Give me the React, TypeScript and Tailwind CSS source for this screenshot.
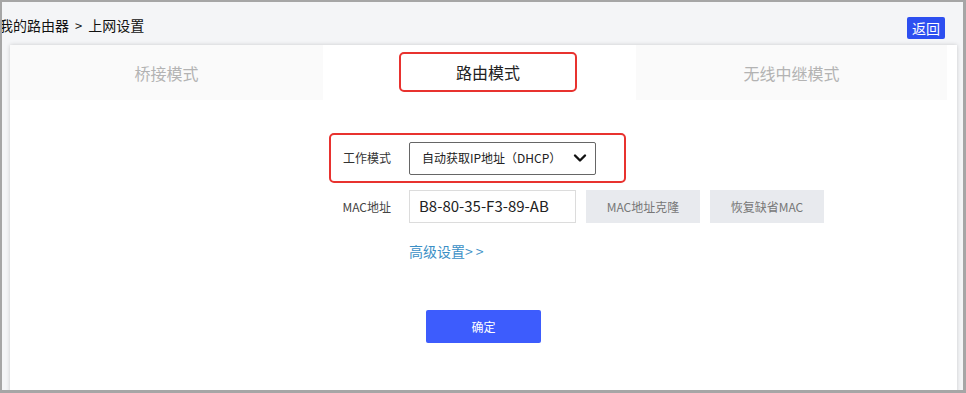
import React from "react";

const font = { fontFamily: '"Noto Sans CJK SC", "Noto Sans", sans-serif' };

export default function App() {
  return (
    <div
      className="w-[966px] h-[393px] overflow-hidden border-t-2 border-l-2 border-r-[3px] border-b-[3px] border-[#a6a6a6] bg-[#f4f5f7] box-border"
      style={font}
    >
      <div className="h-[43px] flex items-center justify-between pr-[18px]">
        <div className="-ml-[3px] mt-[4px] text-[14px] text-[#111] flex items-center">
          <span>我的路由器</span>
          <span className="mx-[6px] text-[13px]">&gt;</span>
          <span>上网设置</span>
        </div>
        <button className="mt-[9px] w-[38px] h-[22px] rounded-[2px] bg-[#2d4ff0] text-white text-[14px] leading-[22px]">
          返回
        </button>
      </div>
      <div className="ml-[8px] w-[947px] h-[400px] bg-white shadow-[0_0_4px_rgba(0,0,0,0.18)]">
        <div className="flex w-[937px] h-[55px]">
          <div className="w-[313px] flex items-center justify-center bg-[#fafafa] text-[16px] text-[#b3b3b3]">
            桥接模式
          </div>
          <div className="w-[313px] flex items-center bg-white">
            <div className="w-[178px] h-[40px] -mt-[1px] ml-[76px] border-2 border-[#e8322f] rounded-[5px] flex items-center justify-center text-[16px] text-[#222]">
              路由模式
            </div>
          </div>
          <div className="w-[311px] flex items-center justify-center bg-[#fafafa] text-[16px] text-[#b3b3b3]">
            无线中继模式
          </div>
        </div>

        <div className="mt-[33px] ml-[319px] w-[297px] h-[50px] border-2 border-[#e8322f] rounded-[5px] flex items-center">
          <div className="w-[60px] text-right text-[12px] text-[#333]">工作模式</div>
          <div className="ml-[18px] w-[187px] h-[33px] border border-[#666] rounded-[2px] flex items-center justify-between pl-[12px] pr-[8px] text-[12px] text-[#222]">
            <span>自动获取IP地址（DHCP）</span>
            <svg width="14" height="10" viewBox="0 0 14 10">
              <polyline points="2,2.5 7,7.5 12,2.5" fill="none" stroke="#111" strokeWidth="2.4" strokeLinecap="round" strokeLinejoin="round" />
            </svg>
          </div>
        </div>

        <div className="mt-[7px] ml-[321px] flex items-center">
          <div className="w-[60px] text-right text-[12px] text-[#444]">MAC地址</div>
          <div className="ml-[18px] w-[167px] h-[33px] border border-[#dcdcdc] flex items-center pl-[9px] text-[15px] text-[#222]">
            B8-80-35-F3-89-AB
          </div>
          <button className="ml-[10px] w-[114px] h-[33px] bg-[#e8eaee] text-[12px] text-[#777]">MAC地址克隆</button>
          <button className="ml-[10px] w-[114px] h-[33px] bg-[#e8eaee] text-[12px] text-[#777]">恢复缺省MAC</button>
        </div>

        <div className="mt-[18px] ml-[399px] text-[14px] text-[#3b8fc6] leading-[20px]">
          高级设置<span className="tracking-[3px]">&gt;&gt;</span>
        </div>

        <button className="mt-[49px] ml-[416px] w-[115px] h-[33px] rounded-[2px] bg-[#3d5cfd] text-white text-[12px]">
          确定
        </button>
      </div>
    </div>
  );
}
